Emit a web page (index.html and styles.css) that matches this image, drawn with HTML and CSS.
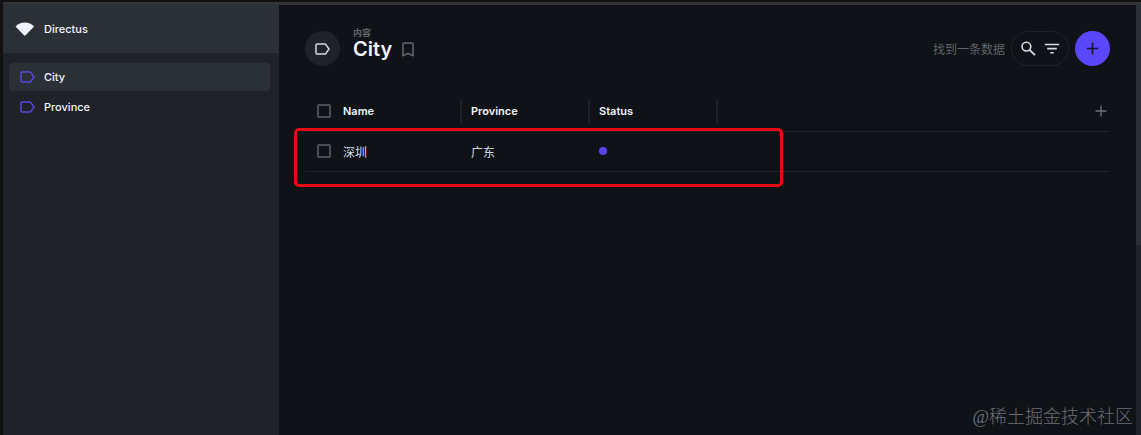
FILE: index.html
```html
<!DOCTYPE html>
<html lang="zh-CN">
<head>
  <meta charset="UTF-8">
  <meta name="viewport" content="width=device-width, initial-scale=1.0">
  <title>City</title>
  <link rel="stylesheet" href="styles.css">
</head>
<body>
  <div class="app">
    <aside class="sidebar">
      <a href="#" class="brand">
        <svg class="brand-logo" viewBox="0 0 20 14"><path d="M0.5 4.4 C5 -0.9 14.6 -0.9 19.1 4.4 L10.6 13.3 Q9.8 14 9 13.3 Z" fill="#f0f4ff"/></svg>
        Directus
      </a>
      <nav class="nav">
        <a href="#" class="nav-item active">
          <svg class="label-icon" viewBox="0 0 15 12"><path d="M2 1 H9.6 Q10.4 1 10.9 1.6 L14 6 L10.9 10.4 Q10.4 11 9.6 11 H2 Q1 11 1 10 V2 Q1 1 2 1 Z"/></svg>
          City
        </a>
        <a href="#" class="nav-item">
          <svg class="label-icon" viewBox="0 0 15 12"><path d="M2 1 H9.6 Q10.4 1 10.9 1.6 L14 6 L10.9 10.4 Q10.4 11 9.6 11 H2 Q1 11 1 10 V2 Q1 1 2 1 Z"/></svg>
          Province
        </a>
      </nav>
    </aside>

    <main class="content">
      <header class="header">
        <span class="header-icon">
          <svg class="label-icon" viewBox="0 0 15 12"><path d="M2 1 H9.6 Q10.4 1 10.9 1.6 L14 6 L10.9 10.4 Q10.4 11 9.6 11 H2 Q1 11 1 10 V2 Q1 1 2 1 Z"/></svg>
        </span>
        <div class="title">
          <span class="crumb">内容</span>
          <h1>City</h1>
        </div>
        <button class="bookmark" aria-label="Bookmark">
          <svg width="12" height="16" viewBox="0 0 12 16"><path d="M1 14.6 V3 Q1 2 2 2 H10 Q11 2 11 3 V14.6 L6 12.4 Z" fill="none" stroke="#666a70" stroke-width="1.5"/></svg>
        </button>
        <span class="count">找到一条数据</span>
        <div class="search">
          <button aria-label="Search">
            <svg width="16" height="16" viewBox="0 0 16 16" fill="none" stroke="#d5dae4" stroke-width="1.6"><circle cx="6.4" cy="5.6" r="4.4"/><path d="M9.6 8.8 L15 14.2" stroke-width="1.9"/></svg>
          </button>
          <button aria-label="Filter">
            <svg width="16" height="16" viewBox="0 0 16 16" stroke="#d5dae4" stroke-width="1.6"><path d="M0.8 3.5 H15.2 M3.2 7.6 H12.8 M6.3 11.8 H9.7"/></svg>
          </button>
        </div>
        <button class="add" aria-label="Create">
          <svg width="13" height="13" viewBox="0 0 13 13" stroke="#15171e" stroke-width="1.6"><path d="M6.5 0.8 V12.2 M0.8 6.5 H12.2"/></svg>
        </button>
      </header>

      <div class="table-wrap">
        <table class="table">
          <thead>
            <tr>
              <th class="select"><input type="checkbox" aria-label="Select all"></th>
              <th class="field"><div class="cell">Name</div></th>
              <th class="field"><div class="cell">Province</div></th>
              <th class="field"><div class="cell">Status</div></th>
              <th class="more">
                <button aria-label="Add field">
                  <svg width="12" height="12" viewBox="0 0 12 12" stroke="#70747b" stroke-width="1.3"><path d="M6 0.5 V11.5 M0.5 6 H11.5"/></svg>
                </button>
              </th>
            </tr>
          </thead>
          <tbody>
            <tr>
              <td class="select"><input type="checkbox" aria-label="深圳"></td>
              <td>深圳</td>
              <td>广东</td>
              <td><span class="dot"></span></td>
              <td></td>
            </tr>
          </tbody>
        </table>
        <div class="highlight"></div>
      </div>

      <div class="watermark">@稀土掘金技术社区</div>
    </main>

    <aside class="rail"><div class="rail-top"></div></aside>
  </div>
</body>
</html>
```

FILE: styles.css
```css
* {
  box-sizing: border-box;
}

body {
  margin: 0;
  padding: 2px 0 0 3px;
  background: #111;
  color: #f0f4ff;
  font-family: Inter, "Noto Sans CJK SC", sans-serif;
  font-size: 11px;
}

button {
  display: flex;
  padding: 0;
  border: none;
  background: none;
  cursor: pointer;
}

svg {
  display: block;
}

.app {
  display: flex;
  min-height: calc(100vh - 2px);
  border-top: 3px solid #333335;
}

/* sidebar */
.sidebar {
  flex: 0 0 276px;
  background: #1f2229;
}

.brand {
  display: flex;
  align-items: center;
  gap: 9px;
  height: 48px;
  padding-left: 12px;
  background: #2b2f36;
  color: #f0f4ff;
  font-weight: 500;
  text-decoration: none;
}

.brand-logo {
  width: 20px;
  height: 14px;
}

.nav {
  display: flex;
  flex-direction: column;
  gap: 2px;
  padding: 10px 9px 10px 6px;
}

.nav-item {
  display: flex;
  align-items: center;
  gap: 9px;
  height: 28px;
  padding-left: 11px;
  border-radius: 4px;
  color: #f0f4ff;
  font-weight: 500;
  text-decoration: none;
}

.nav-item.active {
  background: #2b2f36;
}

.label-icon {
  width: 15px;
  height: 12px;
  fill: none;
  stroke: #5a48e0;
  stroke-width: 1.5;
}

/* main */
.content {
  flex: 1;
  display: flex;
  flex-direction: column;
  min-width: 0;
  padding: 26px 26px 6px;
  background: #0f1217;
}

.header {
  display: flex;
  align-items: center;
  height: 35px;
}

.header-icon {
  display: flex;
  align-items: center;
  justify-content: center;
  width: 35px;
  height: 35px;
  border-radius: 50%;
  background: #1f2229;
}

.header-icon .label-icon {
  stroke: #d5dae4;
}

.title {
  margin: 0 10px 10px 13px;
}

.crumb {
  display: block;
  color: #60646a;
  font-size: 9px;
  font-weight: 600;
  line-height: 10px;
}

.title h1 {
  margin: 0;
  font-size: 20px;
  font-weight: 600;
  line-height: 22px;
}

.count {
  margin-left: auto;
  color: #60646a;
  font-size: 12px;
}

.search {
  display: flex;
  align-items: center;
  justify-content: center;
  gap: 8px;
  width: 58px;
  height: 35px;
  margin: 0 6px;
  border: 1px solid #1f2229;
  border-radius: 18px;
}

.add {
  align-items: center;
  justify-content: center;
  width: 35px;
  height: 35px;
  border-radius: 50%;
  background: #5a46fb;
}

/* table */
.table-wrap {
  position: relative;
  margin-top: 25px;
}

.table {
  width: 100%;
  border-collapse: collapse;
  table-layout: fixed;
}

.table th,
.table td {
  height: 40px;
  padding: 0 0 0 10px;
  border-bottom: 1px solid #1f2228;
  text-align: left;
}

.table th {
  font-weight: 600;
}

.table td {
  color: #d5dae4;
  font-size: 12px;
}

.table .select {
  width: 28px;
  padding-left: 12px;
}

.field {
  width: 128px;
}

.cell {
  height: 24px;
  margin-right: -1px;
  border-right: 2px solid #1f2228;
  line-height: 24px;
}

.more button {
  margin: 0 3px 0 auto;
}

input[type="checkbox"] {
  display: block;
  appearance: none;
  width: 14px;
  height: 14px;
  margin: 0;
  border: 2px solid #4a4d53;
  border-radius: 2px;
}

.dot {
  display: block;
  width: 8px;
  height: 8px;
  border-radius: 50%;
  background: #5a46e8;
}

.highlight {
  position: absolute;
  top: 37px;
  left: -11px;
  width: 489px;
  height: 59px;
  border: 3px solid #e50a14;
  border-radius: 5px;
  pointer-events: none;
}

.watermark {
  margin: auto -23px 0 0;
  color: #6c6f74;
  font-family: "Liberation Serif", "Noto Sans CJK SC", serif;
  font-size: 18px;
  font-weight: 300;
  line-height: 24px;
  text-align: right;
}

.rail {
  flex: 0 0 5px;
  background: #1f2229;
}

.rail-top {
  height: 240px;
  background: #2b2f36;
}
```
